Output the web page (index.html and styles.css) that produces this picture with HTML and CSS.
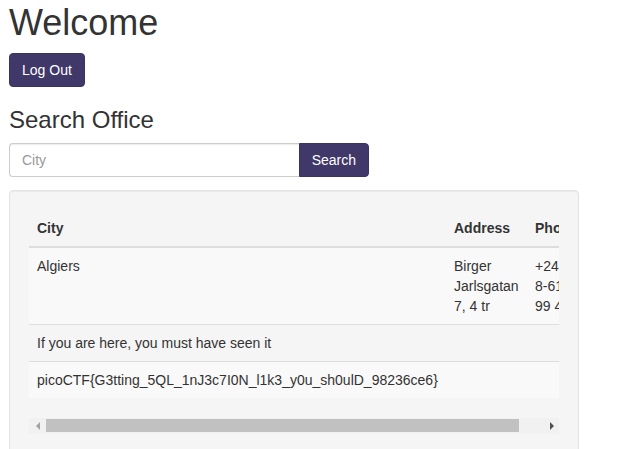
FILE: index.html
```html
<!DOCTYPE html>
<html>
<head>
<meta charset="utf-8">
<link rel="stylesheet" href="styles.css">
</head>
<body>
<div class="page">
  <h1 class="title">Welcome</h1>
  <button class="btn">Log Out</button>
  <h3 class="subtitle">Search Office</h3>
  <form class="search">
    <input class="search-input" type="text" placeholder="City">
    <button class="btn btn-attached" type="button">Search</button>
  </form>
  <div class="well">
    <div class="table-wrap">
      <table class="table">
        <colgroup>
          <col class="col-city">
          <col class="col-address">
          <col class="col-phone">
          <col class="col-extra">
        </colgroup>
        <thead>
          <tr><th>City</th><th>Address</th><th>Phone</th><th>Country</th></tr>
        </thead>
        <tbody>
          <tr class="odd"><td>Algiers</td><td>Birger Jarlsgatan 7, 4 tr</td><td>+2468 8-6199 99 400</td><td>Algeria</td></tr>
          <tr><td>If you are here, you must have seen it</td><td></td><td></td><td></td></tr>
          <tr class="odd"><td>picoCTF{G3tting_5QL_1nJ3c7I0N_l1k3_y0u_sh0ulD_98236ce6}</td><td></td><td></td><td></td></tr>
        </tbody>
      </table>
    </div>
    <div class="scrollbar">
      <span class="arrow arrow-left"></span>
      <span class="thumb"></span>
      <span class="arrow arrow-right"></span>
    </div>
  </div>
</div>
</body>
</html>
```

FILE: styles.css
```css
html, body {
  margin: 0;
  padding: 0;
  background: #fff;
}
body {
  font-family: "Liberation Sans", Arial, Helvetica, sans-serif;
  font-size: 14px;
  line-height: 20px;
  color: #333;
}
.page {
  padding: 0 9px;
  overflow: hidden;
  height: 449px;
}
.title {
  font-size: 36px;
  font-weight: 500;
  line-height: 1.1;
  margin: 3px 0 10px;
}
.btn {
  display: block;
  font-family: inherit;
  font-size: 14px;
  line-height: 20px;
  padding: 6px 12px;
  color: #fff;
  background: #3f3869;
  border: 1px solid #3a3361;
  border-radius: 4px;
  cursor: pointer;
}
.subtitle {
  font-size: 24px;
  font-weight: 500;
  line-height: 1.1;
  margin: 20px 0 10px;
}
.search {
  display: flex;
  width: 360px;
  margin: 0 0 13px;
}
.search-input {
  flex: 1;
  min-width: 0;
  box-sizing: border-box;
  height: 34px;
  padding: 6px 12px;
  font-family: inherit;
  font-size: 14px;
  color: #555;
  border: 1px solid #ccc;
  border-right: 0;
  border-radius: 4px 0 0 4px;
  box-shadow: inset 0 1px 1px rgba(0,0,0,.075);
  outline: none;
}
.search-input::placeholder {
  color: #999;
}
.btn-attached {
  border-radius: 0 4px 4px 0;
}
.well {
  width: 570px;
  box-sizing: border-box;
  padding: 19px;
  background: #f5f5f5;
  border: 1px solid #e3e3e3;
  border-radius: 4px;
  box-shadow: inset 0 1px 1px rgba(0,0,0,.05);
}
.table-wrap {
  overflow: hidden;
}
.table {
  table-layout: fixed;
  width: 680px;
  border-collapse: collapse;
  border-spacing: 0;
  margin-bottom: 20px;
}
.col-city { width: 417px; }
.col-address { width: 81px; }
.col-phone { width: 70px; }
.col-extra { width: 112px; }
.table th, .table td {
  padding: 8px;
  text-align: left;
  vertical-align: top;
  line-height: 20px;
}
.table th {
  font-weight: bold;
  vertical-align: bottom;
  border-bottom: 2px solid #ddd;
}
.table td {
  border-top: 1px solid #ddd;
}
.table td:first-child {
  white-space: nowrap;
}
.table .odd {
  background: #f9f9f9;
}
.scrollbar {
  display: flex;
  align-items: center;
  height: 16px;
  background: #f1f1f1;
}
.thumb {
  width: 473px;
  height: 13px;
  background: #c1c1c1;
}
.arrow {
  width: 0;
  height: 0;
  border-top: 4px solid transparent;
  border-bottom: 4px solid transparent;
}
.arrow-left {
  margin: 0 6px 0 7px;
  border-right: 4px solid #a3a3a3;
}
.arrow-right {
  margin-left: 31px;
  border-left: 4px solid #505050;
}
```
